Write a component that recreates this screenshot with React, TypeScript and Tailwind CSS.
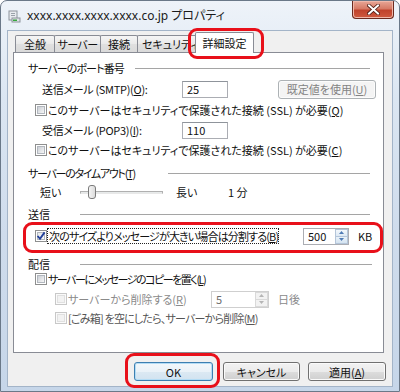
import React from "react";

const FONT =
  "font-['Noto_Sans_CJK_JP','Noto_Sans',sans-serif] [font-feature-settings:'palt']";

function Check({ checked = false, disabled = false }: { checked?: boolean; disabled?: boolean }) {
  return (
    <span
      className={`relative block w-[12px] h-[12px] shrink-0 border ${
        disabled ? "border-[#c8c8c8] bg-[#fafafa]" : "border-[#8e8f8f] bg-white"
      }`}
    >
      <span
        className={`absolute left-[1px] top-[1px] w-[8px] h-[8px] border ${
          disabled
            ? "border-[#e0e0e0] bg-[#f2f2f2]"
            : checked
            ? "border-[#b2b7be] bg-[linear-gradient(135deg,#e4e7ea,#fbfbfb)]"
            : "border-[#b2b7be] bg-[linear-gradient(135deg,#cbcfd5,#f6f6f6)]"
        }`}
      />
      {checked && (
        <svg className="absolute left-[0px] top-[0px]" width="10" height="10" viewBox="0 0 10 10">
          <path d="M1.6 5 L4 7.8 L8.6 1.4" fill="none" stroke="#22409a" strokeWidth="1.9" />
        </svg>
      )}
    </span>
  );
}

function Field({ value, w }: { value: string; w: string }) {
  return (
    <div
      className={`${w} h-[17px] border border-[#abadb3] border-t-[#8f949b] bg-white flex items-center pl-[4px] text-[11px] leading-[14px]`}
    >
      {value}
    </div>
  );
}

function Spin({ value, w, disabled = false }: { value: string; w: string; disabled?: boolean }) {
  const arrow = disabled ? "#b5b5b5" : "#4f7bb5";
  return (
    <div
      className={`${w} h-[17px] border ${
        disabled ? "border-[#cfcfcf]" : "border-[#abadb3]"
      } bg-white flex`}
    >
      <div
        className={`flex-1 flex items-center pl-[4px] text-[11px] leading-[14px] ${
          disabled ? "text-[#6d6d6d]" : ""
        }`}
      >
        {value}
      </div>
      <div className="w-[13px] flex flex-col">
        <div
          className={`flex-1 flex items-center justify-center border ${
            disabled
              ? "border-[#d9d9d9] bg-[#f2f2f2]"
              : "border-[#b4c5d9] bg-[linear-gradient(#f3f8fc,#dde9f4)]"
          }`}
        >
          <svg width="5" height="3" viewBox="0 0 5 3">
            <path d="M0 3 L2.5 0 L5 3Z" fill={arrow} />
          </svg>
        </div>
        <div
          className={`flex-1 flex items-center justify-center border border-t-0 ${
            disabled
              ? "border-[#d9d9d9] bg-[#f2f2f2]"
              : "border-[#b4c5d9] bg-[linear-gradient(#eaf2f9,#d4e3f1)]"
          }`}
        >
          <svg width="5" height="3" viewBox="0 0 5 3">
            <path d="M0 0 L2.5 3 L5 0Z" fill={arrow} />
          </svg>
        </div>
      </div>
    </div>
  );
}

function Btn({
  children,
  w,
  variant = "normal",
}: {
  children: React.ReactNode;
  w: string;
  variant?: "normal" | "default" | "disabled";
}) {
  const cls =
    variant === "default"
      ? "border-[#3c7fb1] bg-[linear-gradient(#f3f8fb,#eaf2f8_50%,#dce9f3_50%,#d2e3f0)] shadow-[inset_0_0_0_1px_#b3dcf5]"
      : variant === "disabled"
      ? "border-[#adb2b5] bg-[#f4f4f4] text-[#838383] shadow-[inset_0_0_0_1px_#fcfcfc]"
      : "border-[#707070] bg-[linear-gradient(#f2f2f2,#ebebeb_50%,#dddddd_50%,#cfcfcf)] shadow-[inset_0_0_0_1px_#fafafa]";
  return (
    <div
      className={`${w} h-[19px] rounded-[3px] border flex items-center justify-center text-[11px] leading-[14px] ${cls}`}
    >
      {children}
    </div>
  );
}

export default function App() {
  return (
    <div
      className={`${FONT} relative w-[400px] h-[392px] overflow-hidden flex flex-col text-[11px] text-[#111] border border-[#6a7888] rounded-t-[7px] bg-[linear-gradient(180deg,#eef3f9,#dbe6f2_25%,#cfdcec_60%,#c6d6e9)]`}
    >
      {/* title bar */}
      <div className="h-[29px] shrink-0 flex items-center pl-[7px]">
        <svg width="13" height="13" viewBox="0 0 13 13" className="mr-[6px] mt-[1px]">
          <rect x="1" y="1" width="8" height="9" fill="#e8ebef" stroke="#8d949c" strokeWidth="1" />
          <rect x="3" y="3" width="4" height="1" fill="#9aa2aa" />
          <rect x="3" y="5" width="4" height="1" fill="#9aa2aa" />
          <rect x="4" y="8" width="8" height="4" fill="#dfe3e7" stroke="#8d949c" strokeWidth="1" />
          <rect x="5" y="9.5" width="4" height="1.5" fill="#35a83c" />
        </svg>
        <span className="text-[12px] leading-[16px] font-['Noto_Sans','Noto_Sans_CJK_JP',sans-serif] text-[#1a1a1a]">
          xxxx.xxxx.xxxx.xxxx.co.jp プロパティ
        </span>
      </div>

      {/* close button */}
      <div className="absolute left-[351px] top-0 w-[42px] h-[18px] rounded-b-[4px] border border-t-0 border-[#6b2a1f] bg-[linear-gradient(#e8a797,#d67a66_45%,#c0432c_55%,#cf5a3f)] shadow-[inset_0_0_0_1px_#f0b8aa] flex items-center justify-center">
        <svg width="13" height="11" viewBox="0 0 13 11">
          <path d="M2 1.5 L11 9.5 M11 1.5 L2 9.5" stroke="#4a1a12" strokeWidth="3.6" strokeLinecap="square" />
          <path d="M2 1.5 L11 9.5 M11 1.5 L2 9.5" stroke="#ffffff" strokeWidth="2" strokeLinecap="square" />
        </svg>
      </div>

      {/* client area */}
      <div className="mx-[6px] mb-[4px] flex-1 border border-[#a3b4c8] bg-[#f0f0f0] flex flex-col">
        {/* tabs */}
        <div className="h-[21px] flex items-end pl-[7px]">
          <div className="w-[40px] h-[17px] border border-b-0 border-[#898c95] rounded-t-[2px] bg-[linear-gradient(#f5f5f5,#e9e9e9_50%,#e0e0e0_50%,#dadada)] flex items-center justify-center leading-[14px]">
            全般
          </div>
          <div className="w-[47px] h-[17px] -ml-[1px] border border-b-0 border-[#898c95] rounded-t-[2px] bg-[linear-gradient(#f5f5f5,#e9e9e9_50%,#e0e0e0_50%,#dadada)] flex items-center justify-center leading-[14px] tracking-[-0.6px]">
            サーバー
          </div>
          <div className="w-[38px] h-[17px] -ml-[1px] border border-b-0 border-[#898c95] rounded-t-[2px] bg-[linear-gradient(#f5f5f5,#e9e9e9_50%,#e0e0e0_50%,#dadada)] flex items-center justify-center leading-[14px]">
            接続
          </div>
          <div className="w-[62px] h-[17px] -ml-[1px] border border-b-0 border-[#898c95] rounded-t-[2px] bg-[linear-gradient(#f5f5f5,#e9e9e9_50%,#e0e0e0_50%,#dadada)] flex items-center pl-[4px] overflow-hidden whitespace-nowrap leading-[14px]">
            セキュリティ
          </div>
          <div className="relative z-10 w-[59px] h-[21px] -ml-[4px] -mb-[1px] border border-b-0 border-[#898c95] rounded-t-[2px] bg-white flex items-center justify-center pb-[1px] leading-[14px]">
            詳細設定
          </div>
        </div>

        {/* panel */}
        <div className="ml-[5px] w-[371px] h-[301px] border border-[#898c95] bg-white flex flex-col pl-[14px] pr-[13px] pt-[7px]">
          <div className="flex items-center justify-between h-[16px]">
            <span className="leading-[14px] tracking-[-0.9px] whitespace-nowrap">サーバーのポート番号</span>
            <div className="w-[235px] h-0 border-t border-[#a5a5a5]" />
          </div>

          <div className="mt-[4px] h-[18px] flex items-center">
            <span className="w-[154px] pl-[14px] leading-[14px] whitespace-nowrap tracking-[-0.3px]">
              送信メール (SMTP)(<u>O</u>):
            </span>
            <Field value="25" w="w-[46px]" />
            <div className="ml-auto -mr-[6px]">
              <Btn w="w-[98px]" variant="disabled">
                <span>
                  既定値を使用(<u>U</u>)
                </span>
              </Btn>
            </div>
          </div>

          <div className="mt-[4px] h-[16px] flex items-center pl-[7px] gap-[1px]">
            <Check />
            <span className="leading-[14px] whitespace-nowrap">
              このサーバーはセキュリティで保護された接続 (SSL) が必要(<u>Q</u>)
            </span>
          </div>

          <div className="mt-[3px] h-[18px] flex items-center">
            <span className="w-[154px] pl-[14px] leading-[14px] whitespace-nowrap tracking-[-0.3px]">
              受信メール (POP3)(<u>I</u>):
            </span>
            <Field value="110" w="w-[46px]" />
          </div>

          <div className="mt-[3px] h-[16px] flex items-center pl-[7px] gap-[1px]">
            <Check />
            <span className="leading-[14px] whitespace-nowrap">
              このサーバーはセキュリティで保護された接続 (SSL) が必要(<u>C</u>)
            </span>
          </div>

          <div className="mt-[7px] flex items-center justify-between h-[16px]">
            <span className="leading-[14px] tracking-[-1.3px] whitespace-nowrap">
              サーバーのタイムアウト(<u>T</u>)
            </span>
            <div className="w-[202px] h-0 border-t border-[#a5a5a5]" />
          </div>

          <div className="mt-[3px] h-[16px] flex items-center">
            <span className="w-[52px] pl-[12px] leading-[14px]">短い</span>
            <div className="relative w-[83px] h-[16px] flex items-center">
              <div className="w-full h-[3px] border border-[#b0b0b0] border-b-[#e8e8e8] bg-[#e7eaea]" />
              <div className="absolute left-[8px] top-[1px] w-[8px] h-[14px] rounded-[3px] border border-[#7b7b7b] bg-[linear-gradient(90deg,#f4f4f4,#dcdcdc)]" />
            </div>
            <span className="ml-[13px] w-[52px] leading-[14px]">長い</span>
            <span className="leading-[14px]">1 分</span>
          </div>

          <div className="mt-[6px] flex items-center justify-between h-[16px]">
            <span className="leading-[14px]">送信</span>
            <div className="w-[290px] h-0 border-t border-[#a5a5a5]" />
          </div>

          <div className="mt-[5px] h-[18px] flex items-center pl-[7px]">
            <Check checked />
            <span className="w-[232px] h-[16px] border border-dotted border-[#222] flex items-center px-[1px] leading-[14px] whitespace-nowrap tracking-[-0.85px]">
              次のサイズよりメッセージが大きい場合は分割する(<u>B</u>)
            </span>
            <div className="ml-[24px]">
              <Spin value="500" w="w-[46px]" />
            </div>
            <span className="ml-[9px] leading-[14px]">KB</span>
          </div>

          <div className="mt-[12px] h-[14px] flex items-center justify-between">
            <span className="leading-[14px]">配信</span>
            <div className="w-[292px] -mr-[2px] h-0 border-t border-[#a5a5a5]" />
          </div>

          <div className="h-[16px] flex items-center pl-[7px] gap-[1px]">
            <Check />
            <span className="leading-[14px] whitespace-nowrap tracking-[-1.5px]">
              サーバーにメッセージのコピーを置く(<u>L</u>)
            </span>
          </div>

          <div className="mt-[4px] h-[16px] flex items-center pl-[27px]">
            <Check disabled />
            <span className="ml-[1px] w-[143px] leading-[14px] whitespace-nowrap text-[#8a8a8a]">
              サーバーから削除する(<u>R</u>)
            </span>
            <Spin value="5" w="w-[58px]" disabled />
            <span className="ml-[9px] leading-[14px] text-[#8a8a8a]">日後</span>
          </div>

          <div className="mt-[3px] h-[16px] flex items-center pl-[27px] gap-[1px]">
            <Check disabled />
            <span className="leading-[14px] whitespace-nowrap text-[#555555] tracking-[-0.8px]">
              [ごみ箱] を空にしたら、サーバーから削除(<u>M</u>)
            </span>
          </div>
        </div>

        {/* buttons */}
        <div className="mt-[9px] flex justify-end pr-[6px]">
          <Btn w="w-[79px]" variant="default">
            OK
          </Btn>
          <div className="ml-[10px]">
            <Btn w="w-[77px]">キャンセル</Btn>
          </div>
          <div className="ml-[8px]">
            <Btn w="w-[78px]">
              <span>
                適用(<u>A</u>)
              </span>
            </Btn>
          </div>
        </div>
      </div>

      {/* red highlight overlays */}
      <div className="absolute z-20 left-[187px] top-[27px] w-[76px] h-[31px] rounded-[9px] border-[3px] border-[#e8101a] pointer-events-none" />
      <div className="absolute z-20 left-[22px] top-[221px] w-[360px] h-[31px] rounded-[9px] border-[3px] border-[#e8101a] pointer-events-none" />
      <div className="absolute z-20 left-[124px] top-[352px] w-[95px] h-[35px] rounded-[9px] border-[3px] border-[#e8101a] pointer-events-none" />
    </div>
  );
}
